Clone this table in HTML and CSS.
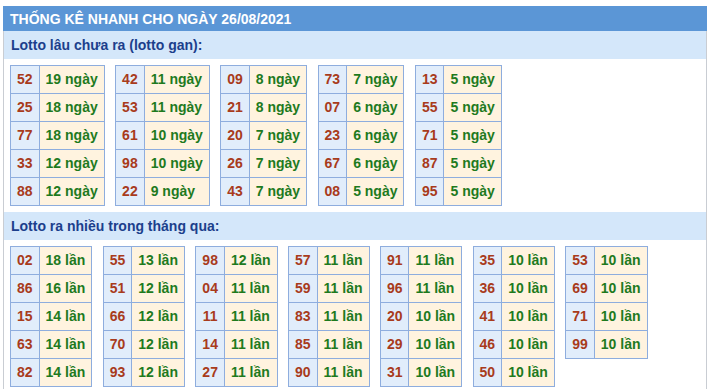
FILE: index.html
```html
<!DOCTYPE html>
<html lang="vi">
<head>
<meta charset="utf-8">
<title>Thống kê nhanh</title>
<link rel="stylesheet" href="styles.css">
</head>
<body>
<div class="page">
  <div class="head">THỐNG KÊ NHANH CHO NGÀY 26/08/2021</div>
  <div class="box">
    <div class="sec-title">Lotto lâu chưa ra (lotto gan):</div>
    <div class="tables">
      <table class="st">
        <tr><td class="num">52</td><td class="val">19 ngày</td></tr>
        <tr><td class="num">25</td><td class="val">18 ngày</td></tr>
        <tr><td class="num">77</td><td class="val">18 ngày</td></tr>
        <tr><td class="num">33</td><td class="val">12 ngày</td></tr>
        <tr><td class="num">88</td><td class="val">12 ngày</td></tr>
      </table>
      <table class="st">
        <tr><td class="num">42</td><td class="val">11 ngày</td></tr>
        <tr><td class="num">53</td><td class="val">11 ngày</td></tr>
        <tr><td class="num">61</td><td class="val">10 ngày</td></tr>
        <tr><td class="num">98</td><td class="val">10 ngày</td></tr>
        <tr><td class="num">22</td><td class="val">9 ngày</td></tr>
      </table>
      <table class="st">
        <tr><td class="num">09</td><td class="val">8 ngày</td></tr>
        <tr><td class="num">21</td><td class="val">8 ngày</td></tr>
        <tr><td class="num">20</td><td class="val">7 ngày</td></tr>
        <tr><td class="num">26</td><td class="val">7 ngày</td></tr>
        <tr><td class="num">43</td><td class="val">7 ngày</td></tr>
      </table>
      <table class="st">
        <tr><td class="num">73</td><td class="val">7 ngày</td></tr>
        <tr><td class="num">07</td><td class="val">6 ngày</td></tr>
        <tr><td class="num">23</td><td class="val">6 ngày</td></tr>
        <tr><td class="num">67</td><td class="val">6 ngày</td></tr>
        <tr><td class="num">08</td><td class="val">5 ngày</td></tr>
      </table>
      <table class="st">
        <tr><td class="num">13</td><td class="val">5 ngày</td></tr>
        <tr><td class="num">55</td><td class="val">5 ngày</td></tr>
        <tr><td class="num">71</td><td class="val">5 ngày</td></tr>
        <tr><td class="num">87</td><td class="val">5 ngày</td></tr>
        <tr><td class="num">95</td><td class="val">5 ngày</td></tr>
      </table>
    </div>
    <div class="sec-title">Lotto ra nhiều trong tháng qua:</div>
    <div class="tables">
      <table class="st">
        <tr><td class="num">02</td><td class="val">18 lần</td></tr>
        <tr><td class="num">86</td><td class="val">16 lần</td></tr>
        <tr><td class="num">15</td><td class="val">14 lần</td></tr>
        <tr><td class="num">63</td><td class="val">14 lần</td></tr>
        <tr><td class="num">82</td><td class="val">14 lần</td></tr>
      </table>
      <table class="st">
        <tr><td class="num">55</td><td class="val">13 lần</td></tr>
        <tr><td class="num">51</td><td class="val">12 lần</td></tr>
        <tr><td class="num">66</td><td class="val">12 lần</td></tr>
        <tr><td class="num">70</td><td class="val">12 lần</td></tr>
        <tr><td class="num">93</td><td class="val">12 lần</td></tr>
      </table>
      <table class="st">
        <tr><td class="num">98</td><td class="val">12 lần</td></tr>
        <tr><td class="num">04</td><td class="val">11 lần</td></tr>
        <tr><td class="num">11</td><td class="val">11 lần</td></tr>
        <tr><td class="num">14</td><td class="val">11 lần</td></tr>
        <tr><td class="num">27</td><td class="val">11 lần</td></tr>
      </table>
      <table class="st">
        <tr><td class="num">57</td><td class="val">11 lần</td></tr>
        <tr><td class="num">59</td><td class="val">11 lần</td></tr>
        <tr><td class="num">83</td><td class="val">11 lần</td></tr>
        <tr><td class="num">85</td><td class="val">11 lần</td></tr>
        <tr><td class="num">90</td><td class="val">11 lần</td></tr>
      </table>
      <table class="st">
        <tr><td class="num">91</td><td class="val">11 lần</td></tr>
        <tr><td class="num">96</td><td class="val">11 lần</td></tr>
        <tr><td class="num">20</td><td class="val">10 lần</td></tr>
        <tr><td class="num">29</td><td class="val">10 lần</td></tr>
        <tr><td class="num">31</td><td class="val">10 lần</td></tr>
      </table>
      <table class="st">
        <tr><td class="num">35</td><td class="val">10 lần</td></tr>
        <tr><td class="num">36</td><td class="val">10 lần</td></tr>
        <tr><td class="num">41</td><td class="val">10 lần</td></tr>
        <tr><td class="num">46</td><td class="val">10 lần</td></tr>
        <tr><td class="num">50</td><td class="val">10 lần</td></tr>
      </table>
      <table class="st">
        <tr><td class="num">53</td><td class="val">10 lần</td></tr>
        <tr><td class="num">69</td><td class="val">10 lần</td></tr>
        <tr><td class="num">71</td><td class="val">10 lần</td></tr>
        <tr><td class="num">99</td><td class="val">10 lần</td></tr>
      </table>
    </div>
  </div>
</div>
</body>
</html>
```

FILE: styles.css
```css
html, body {
  margin: 0;
  padding: 0;
  background: #ffffff;
}

body {
  font-family: "Liberation Sans", Arial, sans-serif;
  font-size: 14px;
  font-weight: bold;
}

.page {
  padding-top: 6px;
  margin-left: 3px;
  width: 704px;
}

.head {
  background: #5b96d6;
  color: #ffffff;
  height: 25px;
  line-height: 26px;
  padding-left: 7px;
  font-size: 14px;
}

.box {
  border-left: 1px solid #c9cdd3;
  border-right: 1px solid #c9cdd3;
  padding-bottom: 6px;
}

.sec-title {
  background: #d4e7fa;
  color: #1c3f8c;
  height: 28px;
  line-height: 28px;
  padding-left: 7px;
}

.tables {
  display: flex;
  align-items: flex-start;
  gap: 10.4px;
  padding: 6px 6px 6px 6px;
}

.st {
  border-collapse: collapse;
}

.st td {
  border: 1px solid #8eadde;
  height: 27px;
  padding: 0 6px;
  line-height: 27px;
  white-space: nowrap;
}

.st .num {
  background: #e1edfb;
  color: #a83b1c;
  text-align: center;
}

.st .val {
  background: #fff3df;
  color: #1e7a1e;
}
```
